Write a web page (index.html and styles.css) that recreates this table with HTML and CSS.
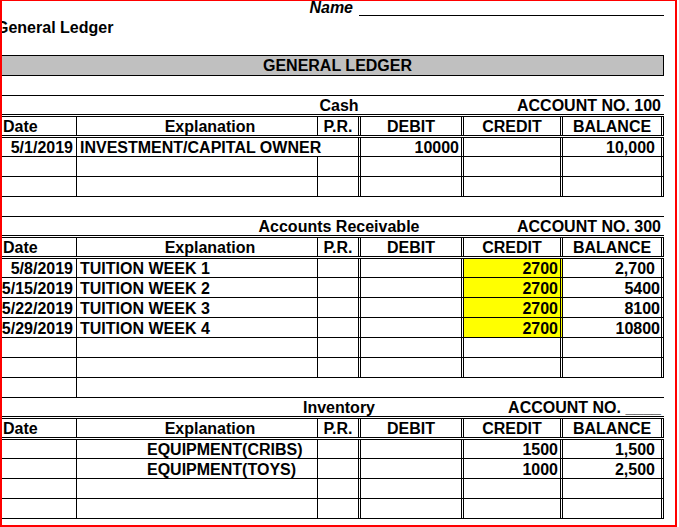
FILE: index.html
```html
<!DOCTYPE html>
<html lang="en">
<head>
<meta charset="utf-8">
<title>General Ledger</title>
<link rel="stylesheet" href="styles.css">
</head>
<body>
<div class="sheet">
  <div class="name-row"><span class="name-label">Name</span><span class="name-line"></span></div>
  <div class="sheet-title">General Ledger</div>
  <div class="spacer"></div>
  <div class="gl-box">GENERAL LEDGER</div>
  <div class="spacer"></div>

  <div class="title-row"><span class="acct-name">Cash</span><span class="acct-no">ACCOUNT NO. 100</span></div>
  <div class="row head">
    <div class="c a lft">Date</div><div class="c b expl">Explanation</div><div class="c p m">P.R.</div><div class="c d m">DEBIT</div><div class="c e m">CREDIT</div><div class="c f m">BALANCE</div>
  </div>
  <div class="row first">
    <div class="c a r">5/1/2019</div><div class="c b txt open">INVESTMENT/CAPITAL OWNER</div><div class="c p"></div><div class="c d r">10000</div><div class="c e r"></div><div class="c f r fmt">10,000</div>
  </div>
  <div class="row">
    <div class="c a"></div><div class="c b"></div><div class="c p"></div><div class="c d"></div><div class="c e"></div><div class="c f"></div>
  </div>
  <div class="row">
    <div class="c a"></div><div class="c b"></div><div class="c p"></div><div class="c d"></div><div class="c e"></div><div class="c f"></div>
  </div>
  <div class="spacer"></div>

  <div class="title-row"><span class="acct-name">Accounts Receivable</span><span class="acct-no">ACCOUNT NO. 300</span></div>
  <div class="row head">
    <div class="c a lft">Date</div><div class="c b expl">Explanation</div><div class="c p m">P.R.</div><div class="c d m">DEBIT</div><div class="c e m">CREDIT</div><div class="c f m">BALANCE</div>
  </div>
  <div class="row first">
    <div class="c a r">5/8/2019</div><div class="c b txt">TUITION WEEK 1</div><div class="c p"></div><div class="c d"></div><div class="c e r hl">2700</div><div class="c f r fmt">2,700</div>
  </div>
  <div class="row">
    <div class="c a r">5/15/2019</div><div class="c b txt">TUITION WEEK 2</div><div class="c p"></div><div class="c d"></div><div class="c e r hl">2700</div><div class="c f r">5400</div>
  </div>
  <div class="row">
    <div class="c a r">5/22/2019</div><div class="c b txt">TUITION WEEK 3</div><div class="c p"></div><div class="c d"></div><div class="c e r hl">2700</div><div class="c f r">8100</div>
  </div>
  <div class="row">
    <div class="c a r">5/29/2019</div><div class="c b txt">TUITION WEEK 4</div><div class="c p"></div><div class="c d"></div><div class="c e r hl">2700</div><div class="c f r">10800</div>
  </div>
  <div class="row">
    <div class="c a"></div><div class="c b"></div><div class="c p"></div><div class="c d"></div><div class="c e"></div><div class="c f"></div>
  </div>
  <div class="row">
    <div class="c a"></div><div class="c b"></div><div class="c p"></div><div class="c d"></div><div class="c e"></div><div class="c f"></div>
  </div>
  <div class="row tail">
    <div class="c a"></div>
  </div>

  <div class="title-row"><span class="acct-name">Inventory</span><span class="acct-no">ACCOUNT NO. ____</span></div>
  <div class="row head">
    <div class="c a lft">Date</div><div class="c b expl">Explanation</div><div class="c p m">P.R.</div><div class="c d m">DEBIT</div><div class="c e m">CREDIT</div><div class="c f m">BALANCE</div>
  </div>
  <div class="row first">
    <div class="c a"></div><div class="c b indent">EQUIPMENT(CRIBS)</div><div class="c p"></div><div class="c d"></div><div class="c e r">1500</div><div class="c f r fmt">1,500</div>
  </div>
  <div class="row">
    <div class="c a"></div><div class="c b indent">EQUIPMENT(TOYS)</div><div class="c p"></div><div class="c d"></div><div class="c e r">1000</div><div class="c f r fmt">2,500</div>
  </div>
  <div class="row">
    <div class="c a"></div><div class="c b"></div><div class="c p"></div><div class="c d"></div><div class="c e"></div><div class="c f"></div>
  </div>
  <div class="row">
    <div class="c a"></div><div class="c b"></div><div class="c p"></div><div class="c d"></div><div class="c e"></div><div class="c f"></div>
  </div>
</div>
</body>
</html>
```

FILE: styles.css
```css
* { box-sizing: border-box; margin: 0; padding: 0; }

body {
  margin: 0;
  background: #fff;
  color: #000;
  font-family: "Liberation Sans", Arial, sans-serif;
  font-weight: bold;
  font-size: 16px;
}

.sheet {
  width: 677px;
  height: 527px;
  border: 2px solid #f00;
  border-top-width: 1px;
  overflow: hidden;
}

.name-row {
  display: flex;
  align-items: flex-end;
  height: 15px;
}

.name-label {
  width: 351px;
  text-align: right;
  font-style: italic;
  line-height: 16px;
}

.name-line {
  width: 305px;
  height: 15px;
  margin-left: 6px;
  border-bottom: 1px solid #000;
}

.sheet-title {
  height: 20px;
  display: flex;
  align-items: flex-end;
  line-height: 16px;
  margin-left: -6px;
  white-space: nowrap;
}

.spacer { height: 19px; }

.gl-box {
  width: 662px;
  height: 21px;
  background: #c0c0c0;
  border: 1px solid #000;
  border-left: none;
  display: flex;
  align-items: flex-end;
  justify-content: center;
  padding-left: 10px;
  line-height: 16px;
  padding-bottom: 1px;
}

.title-row {
  width: 662px;
  height: 22px;
  display: grid;
  align-items: end;
  border-top: 1px solid #000;
  border-bottom: 3px double #000;
  line-height: 16px;
  white-space: nowrap;
}

.acct-name {
  grid-area: 1 / 1;
  justify-self: center;
  padding-left: 12px;
}

.acct-no {
  grid-area: 1 / 1;
  justify-self: end;
  padding-right: 3px;
}

.row {
  width: 662px;
  height: 20px;
  display: grid;
  grid-template-columns: 75px 241px 43px 103px 99px 101px;
  border-bottom: 1px solid #000;
}

.row.first { height: 19px; }

.row.head {
  height: 21px;
  border-bottom: 3px double #000;
}

.row.tail {
  height: 19px;
  border-bottom: none;
}

.c {
  display: flex;
  align-items: flex-end;
  line-height: 16px;
  white-space: nowrap;
  border-right: 1px solid #000;
}

.c.p, .c.d, .c.e, .c.f { border-right: 3px double #000; }

.c.b.open { border-right: none; }

.lft { padding-left: 1px; }
.m { justify-content: center; }
.r { justify-content: flex-end; }

.a.r { padding-right: 3px; }
.d.r, .e.r { padding-right: 2px; }
.f.r { padding-right: 1px; }
.f.r.fmt { padding-right: 6px; }

.expl { justify-content: center; padding-left: 26px; }
.txt { padding-left: 3px; }
.indent { padding-left: 70px; }

.hl { background: #ffff00; }
```
